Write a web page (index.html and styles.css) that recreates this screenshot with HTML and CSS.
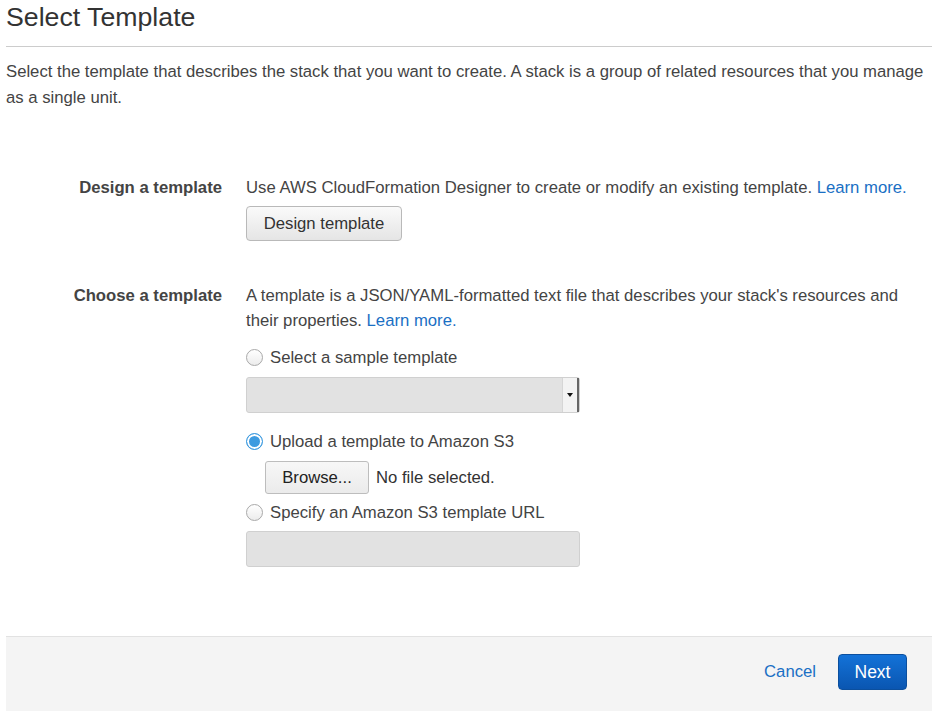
FILE: index.html
```html
<!DOCTYPE html>
<html>
<head>
<meta charset="utf-8">
<link rel="stylesheet" href="styles.css">
</head>
<body>
<div class="page">
  <h1 class="title">Select Template</h1>
  <hr class="rule">
  <p class="intro">Select the template that describes the stack that you want to create. A stack is a group of related resources that you manage as a single unit.</p>

  <div class="row row-design">
    <div class="label">Design a template</div>
    <div class="content">
      <div class="text">Use AWS CloudFormation Designer to create or modify an existing template. <a class="link" href="#">Learn more.</a></div>
      <button class="btn btn-design">Design template</button>
    </div>
  </div>

  <div class="row row-choose">
    <div class="label">Choose a template</div>
    <div class="content">
      <div class="text">A template is a JSON/YAML-formatted text file that describes your stack's resources and their properties. <a class="link" href="#">Learn more.</a></div>

      <div class="radio-line r1"><span class="radio"></span><span>Select a sample template</span></div>
      <div class="select"><span class="select-arrow"><span class="tri"></span></span></div>

      <div class="radio-line r2"><span class="radio checked"></span><span>Upload a template to Amazon S3</span></div>
      <div class="file-line"><button class="btn btn-browse">Browse...</button><span class="nofile">No file selected.</span></div>

      <div class="radio-line r3"><span class="radio"></span><span>Specify an Amazon S3 template URL</span></div>
      <div class="url-input"></div>
    </div>
  </div>

  <div class="footer">
    <a class="cancel" href="#">Cancel</a>
    <button class="btn-next">Next</button>
  </div>
</div>
</body>
</html>
```

FILE: styles.css
```css
html, body {
  margin: 0;
  padding: 0;
  background: #fff;
}
body {
  font-family: "Liberation Sans", Arial, sans-serif;
  font-size: 16.7px;
  color: #444;
  overflow: hidden;
}
.page {
  padding-left: 6px;
}
.title {
  margin: 0;
  font-size: 26.7px;
  font-weight: normal;
  line-height: 34px;
  color: #333;
}
.rule {
  margin: 12px 0 0 0;
  border: 0;
  border-top: 1px solid #cccccc;
  height: 0;
}
.intro {
  margin: 12px 0 0 0;
  line-height: 26px;
  color: #444;
}
.row {
  display: flex;
  gap: 24px;
}
.row-design {
  margin-top: 64px;
}
.row-choose {
  margin-top: 42px;
}
.label {
  width: 216px;
  flex: none;
  text-align: right;
  font-weight: bold;
  line-height: 25px;
  color: #444;
}
.content {
  flex: 1;
  padding-right: 8px;
}
.text {
  line-height: 25px;
}
.link {
  color: #1a6fc4;
  text-decoration: none;
}
.btn {
  font-family: "Liberation Sans", Arial, sans-serif;
  font-size: 16.7px;
  color: #333;
  background: linear-gradient(#fafafa, #e5e5e5);
  border: 1px solid #b9b9b9;
  border-radius: 4px;
  padding: 0;
  display: block;
}
.btn-design {
  margin-top: 6px;
  width: 156px;
  height: 35px;
}
.radio-line {
  display: flex;
  align-items: center;
  gap: 7px;
  height: 25px;
}
.r1 { margin-top: 12px; }
.r2 { margin-top: 16px; }
.r3 { margin-top: 6px; }
.radio {
  width: 15px;
  height: 15px;
  border-radius: 50%;
  border: 1px solid #a9a9a9;
  background: linear-gradient(#ffffff, #ececec);
  flex: none;
}
.radio.checked {
  border: 1px solid #3d9be0;
  background: #3d9be0;
  box-shadow: inset 0 0 0 2px #fff;
}
.select {
  margin-top: 7px;
  width: 332px;
  height: 34px;
  border: 1px solid #d0d0d0;
  border-radius: 3px;
  background: #e2e2e2;
  display: flex;
  justify-content: flex-end;
  align-items: stretch;
}
.select-arrow {
  width: 14px;
  background: #f3f3f3;
  border-right: 2px solid #666;
  border-left: 1px solid #d6d6d6;
  display: flex;
  align-items: center;
  justify-content: center;
}
.tri {
  width: 0;
  height: 0;
  border-left: 3px solid transparent;
  border-right: 3px solid transparent;
  border-top: 4px solid #111;
}
.file-line {
  margin-top: 7px;
  margin-left: 19px;
  display: flex;
  align-items: center;
  gap: 7px;
}
.btn-browse {
  width: 104px;
  height: 33px;
  color: #222;
  border-color: #bdbdbd;
  border-radius: 3px;
  background: linear-gradient(#f7f7f7, #ebebeb);
}
.nofile {
  color: #333;
}
.url-input {
  margin-top: 6px;
  width: 332px;
  height: 34px;
  border: 1px solid #d0d0d0;
  border-radius: 3px;
  background: #e2e2e2;
}
.footer {
  margin-top: 69px;
  height: 80px;
  background: #f4f4f4;
  border-top: 1px solid #e2e2e2;
  display: flex;
  justify-content: flex-end;
  align-items: flex-start;
  padding-top: 17px;
  padding-right: 25px;
  box-sizing: border-box;
}
.cancel {
  color: #1a6fc4;
  text-decoration: none;
  font-size: 16.7px;
  line-height: 36px;
  margin-right: 22px;
}
.btn-next {
  width: 69px;
  height: 36px;
  border: 1px solid #0b4f9e;
  border-radius: 4px;
  background: linear-gradient(#1372d8, #0a56b1);
  color: #fff;
  font-family: "Liberation Sans", Arial, sans-serif;
  font-size: 17.5px;
  padding: 0;
}
```
